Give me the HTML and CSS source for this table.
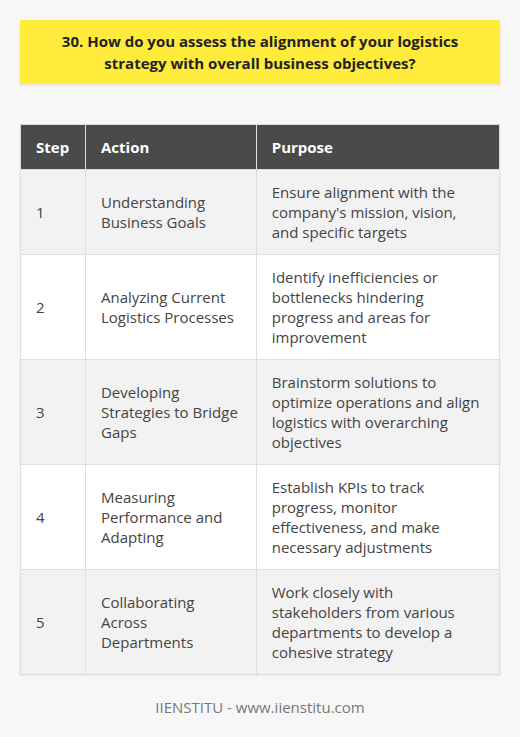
FILE: index.html
```html
<!DOCTYPE html>
<html>
<head>
<meta charset="utf-8">
<link rel="stylesheet" href="styles.css">
</head>
<body>
<div class="page">
  <div class="title">30. How do you assess the alignment of your logistics strategy with overall business objectives?</div>
  <table class="steps">
    <colgroup><col class="c1"><col class="c2"><col class="c3"></colgroup>
    <thead>
      <tr><th>Step</th><th>Action</th><th>Purpose</th></tr>
    </thead>
    <tbody>
      <tr><td>1</td><td>Understanding Business Goals</td><td>Ensure alignment with the company's mission, vision, and specific targets</td></tr>
      <tr><td>2</td><td>Analyzing Current Logistics Processes</td><td>Identify inefficiencies or bottlenecks hindering progress and areas for improvement</td></tr>
      <tr><td>3</td><td>Developing Strategies to Bridge Gaps</td><td>Brainstorm solutions to optimize operations and align logistics with overarching objectives</td></tr>
      <tr><td>4</td><td>Measuring Performance and Adapting</td><td>Establish KPIs to track progress, monitor effectiveness, and make necessary adjustments</td></tr>
      <tr><td>5</td><td>Collaborating Across Departments</td><td>Work closely with stakeholders from various departments to develop a cohesive strategy</td></tr>
    </tbody>
  </table>
  <div class="footer">IIENSTITU - www.iienstitu.com</div>
</div>
</body>
</html>
```
FILE: styles.css
```css
html, body {
  margin: 0;
  padding: 0;
  background: #f7f7f7;
}
body {
  font-family: "Open Sans", "Noto Sans", sans-serif;
  color: #333;
}
.page {
  padding: 20px;
  display: flex;
  flex-direction: column;
}
.title {
  background: #ffeb3b;
  font-weight: bold;
  font-size: 15px;
  line-height: 22px;
  text-align: center;
  color: #222;
  padding: 10px 20px;
  box-shadow: 0 1px 3px rgba(0,0,0,0.12);
}
.steps {
  margin-top: 40px;
  width: 480px;
  border-collapse: collapse;
  font-size: 15px;
  line-height: 20px;
  box-shadow: 0 1px 2px rgba(0,0,0,0.06);
}
.c1 { width: 65px; }
.c2 { width: 171px; }
.c3 { width: 244px; }
.steps th, .steps td {
  border: 1px solid #dddddd;
  padding: 12px 15px;
  text-align: left;
  vertical-align: middle;
}
.steps th {
  background: #4a4a4a;
  color: #fff;
  font-weight: bold;
}
.steps tbody tr:nth-child(odd) td { background: #f2f2f2; }
.steps tbody tr:nth-child(even) td { background: #ffffff; }
.steps td { color: #444; }
.footer {
  margin-top: 22px;
  text-align: center;
  font-size: 15px;
  line-height: 20px;
  color: #777;
}
```
